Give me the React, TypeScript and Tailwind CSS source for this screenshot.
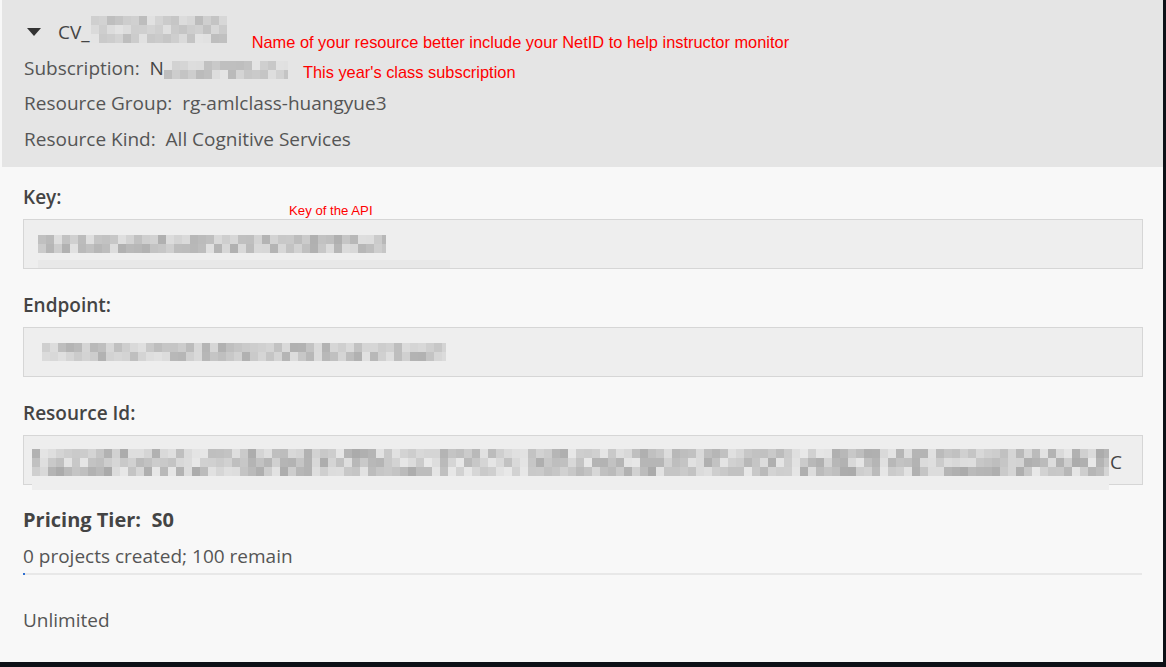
import React from 'react';

// deterministic pseudo-random greys for the pixelated (redacted) text
function shades(seed: number, count: number, min: number, max: number) {
  const out: string[] = [];
  let s = seed;
  for (let i = 0; i < count; i++) {
    s = (s * 9301 + 49297) % 233280;
    const v = Math.round(min + (s / 233280) * (max - min));
    out.push(`rgb(${v},${v},${v})`);
  }
  return out;
}

function Pixelated({ seed, width, rows, min = 175, max = 225, cell = 8 }: { seed: number; width: number; rows: number; min?: number; max?: number; cell?: number }) {
  const cols = Math.ceil(width / cell);
  return (
    <div className="flex flex-col overflow-hidden" style={{ width }}>
      {Array.from({ length: rows }).map((_, r) => (
        <div key={r} className="flex">
          {shades(seed + r * 31, cols, min, max).map((c, i) => (
            <div key={i} className="shrink-0" style={{ width: cell, height: cell + 1, background: c }} />
          ))}
        </div>
      ))}
    </div>
  );
}

const sans = "font-['Open_Sans',sans-serif]";
const note = "font-['Liberation_Sans',Arial,sans-serif] text-[#ff0000]";

function Field({ label, children, extra }: { label: string; children: React.ReactNode; extra?: React.ReactNode }) {
  return (
    <div className="flex flex-col">
      <div className="relative h-[20px] text-[19px] font-semibold leading-[20px] text-[#444]">{label}{extra}</div>
      <div className="relative mt-[12px] h-[50px] border border-[#d6d6d6] bg-[#eeeeee]">{children}</div>
    </div>
  );
}

export default function App() {
  return (
    <div className={`flex h-[667px] w-[1166px] bg-[#0d1117] ${sans}`}>
      <div className="flex h-[662px] w-[1163px] flex-col bg-[#f8f8f8]">
        {/* header */}
        <div className="ml-[2px] flex h-[167px] shrink-0 flex-col bg-[#e5e5e5] pl-[22px] pt-[14px] text-[19px] text-[#555]">
          <div className="flex h-[36px] items-center">
            <svg width="14" height="8" viewBox="0 0 14 8" className="ml-[3px]">
              <path d="M0 0 H14 L7 8 Z" fill="#333" />
            </svg>
            <span className="ml-[17px] text-[#444]">CV_</span>
            <div className="-mt-[6px] ml-[1px]">
              <Pixelated seed={7} width={136} rows={3} min={185} max={230} />
            </div>
            <span className={`ml-[25px] mt-[20px] text-[16.4px] ${note}`}>Name of your resource better include your NetID to help instructor monitor</span>
          </div>
          <div className="flex h-[36px] items-center">
            <span>Subscription:&nbsp;&nbsp;</span>
            <span className="text-[#444]">N</span>
            <div className="mt-[4px]">
              <Pixelated seed={19} width={124} rows={2} min={180} max={230} />
            </div>
            <span className={`ml-[15px] mt-[8px] text-[16.4px] ${note}`}>This year's class subscription</span>
          </div>
          <div className="flex h-[35px] items-center">Resource Group:&nbsp;&nbsp;rg-amlclass-huangyue3</div>
          <div className="flex h-[36px] items-center">Resource Kind:&nbsp;&nbsp;All Cognitive Services</div>
        </div>

        {/* body */}
        <div className="flex flex-col gap-[26px] pl-[23px] pr-[20px] pt-[20px]">
          <Field label="Key:" extra={<span className={`absolute left-[266px] top-[14px] text-[13.2px] font-normal ${note}`}>Key of the API</span>}>
            <div className="absolute left-[14px] top-[15px]">
              <Pixelated seed={3} width={348} rows={2} />
            </div>
            <div className="absolute left-[14px] top-[40px] h-[8px] w-[412px] bg-[#e8e8e8]" />
          </Field>
          <Field label="Endpoint:">
            <div className="absolute left-[18px] top-[15px]">
              <Pixelated seed={11} width={404} rows={2} />
            </div>
          </Field>
          <Field label="Resource Id:">
            <div className="absolute left-[8px] top-[12px] h-[42px] w-[1077px] bg-[#eeeeee]" />
            <div className="absolute left-[8px] top-[12px] flex items-center">
              <Pixelated seed={23} width={1077} rows={3} min={170} max={232} />
              <span className="ml-[1px] text-[19px] text-[#444]">C</span>
            </div>
          </Field>

          <div className="flex flex-col">
            <div className="mt-[-2px] text-[20px] font-bold leading-[22px] text-[#444]">Pricing Tier:&nbsp;&nbsp;S0</div>
            <div className="mt-[14px] text-[19px] leading-[22px] text-[#555]">0 projects created; 100 remain</div>
            <div className="relative mt-[6px] h-[2px] w-[1119px] bg-[#e8e8e8]">
              <div className="absolute left-0 top-0 h-[2px] w-[2px] bg-[#2f6fd0]" />
            </div>
            <div className="mt-[34px] text-[19px] leading-[22px] text-[#555]">Unlimited</div>
          </div>
        </div>
      </div>
    </div>
  );
}
